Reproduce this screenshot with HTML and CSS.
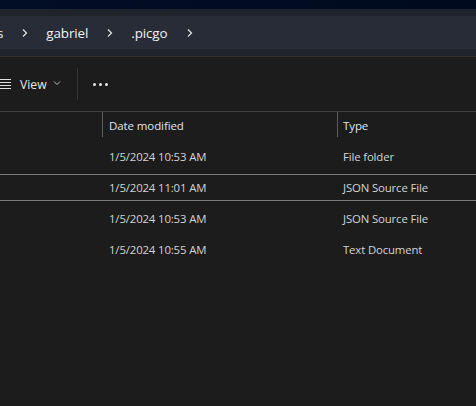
FILE: index.html
```html
<!DOCTYPE html>
<html>
<head>
<meta charset="utf-8">
<link rel="stylesheet" href="styles.css">
</head>
<body>
<div class="top"></div>
<div class="crumb-wrap">
  <div class="crumb">
    <span class="part">s</span>
    <svg class="chev" width="8" height="10" viewBox="0 0 8 10"><path d="M2 1.5 L5.5 5 L2 8.5" fill="none" stroke="#e6e6e6" stroke-width="1.2"/></svg>
    <span class="part">gabriel</span>
    <svg class="chev" width="8" height="10" viewBox="0 0 8 10"><path d="M2 1.5 L5.5 5 L2 8.5" fill="none" stroke="#e6e6e6" stroke-width="1.2"/></svg>
    <span class="part">.picgo</span>
    <svg class="chev" width="8" height="10" viewBox="0 0 8 10"><path d="M2 1.5 L5.5 5 L2 8.5" fill="none" stroke="#e6e6e6" stroke-width="1.2"/></svg>
  </div>
</div>
<div class="toolbar">
  <div class="view">
    <svg class="menu" width="12" height="10" viewBox="0 0 12 10"><path d="M0 0.5H12M0 3.5H12M0 6.5H12M0 9.5H12" stroke="#e0e0e0" stroke-width="1"/></svg>
    <span class="view-label">View</span>
    <svg class="caret" width="8" height="6" viewBox="0 0 8 6"><path d="M1 1.5 L4 4.5 L7 1.5" fill="none" stroke="#bdbdbd" stroke-width="1"/></svg>
  </div>
  <div class="vsep"></div>
  <div class="more"><span></span><span></span><span></span></div>
</div>
<div class="list">
  <div class="head">
    <div class="col name"></div>
    <div class="col date"><span class="hd">Date modified</span></div>
    <div class="col type"><span class="hd">Type</span></div>
  </div>
  <div class="row">
    <div class="cell name"></div>
    <div class="cell date">1/5/2024 10:53 AM</div>
    <div class="cell type">File folder</div>
  </div>
  <div class="row selected">
    <div class="cell name"></div>
    <div class="cell date">1/5/2024 11:01 AM</div>
    <div class="cell type">JSON Source File</div>
  </div>
  <div class="row">
    <div class="cell name"></div>
    <div class="cell date">1/5/2024 10:53 AM</div>
    <div class="cell type">JSON Source File</div>
  </div>
  <div class="row">
    <div class="cell name"></div>
    <div class="cell date">1/5/2024 10:55 AM</div>
    <div class="cell type">Text Document</div>
  </div>
</div>
</body>
</html>
```

FILE: styles.css
```css
html, body {
  margin: 0;
  padding: 0;
  width: 476px;
  height: 406px;
  overflow: hidden;
  background: #1c1c1c;
  font-family: "Open Sans", "Noto Sans", sans-serif;
  color: #d6d6d6;
}
.top {
  height: 9px;
  background: linear-gradient(90deg, #020d26, #000a1e);
}
.crumb-wrap {
  background: #1f232c;
  padding: 7px 0;
  border-bottom: 1px solid #35302b;
}
.crumb {
  height: 33px;
  background: #272c37;
  display: flex;
  align-items: center;
  padding-top: 1px;
  box-sizing: border-box;
  margin-left: -3px;
}
.part {
  font-size: 13.4px;
  color: #f2f2f2;
  letter-spacing: -0.1px;
}
.chev {
  margin: 0 17px 0 18px;
}
.toolbar {
  height: 54px;
  display: flex;
  align-items: center;
}
.view {
  display: flex;
  align-items: center;
  margin-left: -1px;
}
.menu { margin-right: 9px; }
.view-label {
  font-size: 12.2px;
  color: #e8e8e8;
  margin-right: 6px;
}
.caret { margin-top: -2px; }
.vsep {
  width: 1px;
  height: 32px;
  background: #333;
  margin-left: 16px;
}
.more {
  display: flex;
  gap: 3px;
  margin-left: 15px;
}
.more span {
  width: 3px;
  height: 3px;
  border-radius: 50%;
  background: #e6e6e6;
}
.list {
  border-top: 1px solid #3f3f3f;
}
.head {
  display: flex;
  height: 29px;
}
.col {
  display: flex;
  align-items: center;
  box-sizing: border-box;
}
.name { width: 102px; }
.date { width: 235px; padding-left: 6px; }
.type { flex: 1; padding-left: 5px; }
.head .date, .head .type {
  border-left: 1px solid #5a5a5a;
  height: 25px;
  padding-top: 1px;
}
.hd {
  font-size: 11.5px;
  color: #dfe6ef;
  letter-spacing: -0.1px;
}
.row {
  display: flex;
  height: 31px;
  box-sizing: border-box;
}
.cell {
  display: flex;
  align-items: center;
  font-size: 11.4px;
  letter-spacing: -0.15px;
  color: #d4d4d4;
  box-sizing: border-box;
}
.row .date { padding-left: 7px; }
.row .type { padding-left: 6px; }
.row.selected {
  border-top: 1px solid #7b7b7b;
  border-bottom: 1px solid #7b7b7b;
  height: 27px;
  margin: 2px 0 2px;
}
```
